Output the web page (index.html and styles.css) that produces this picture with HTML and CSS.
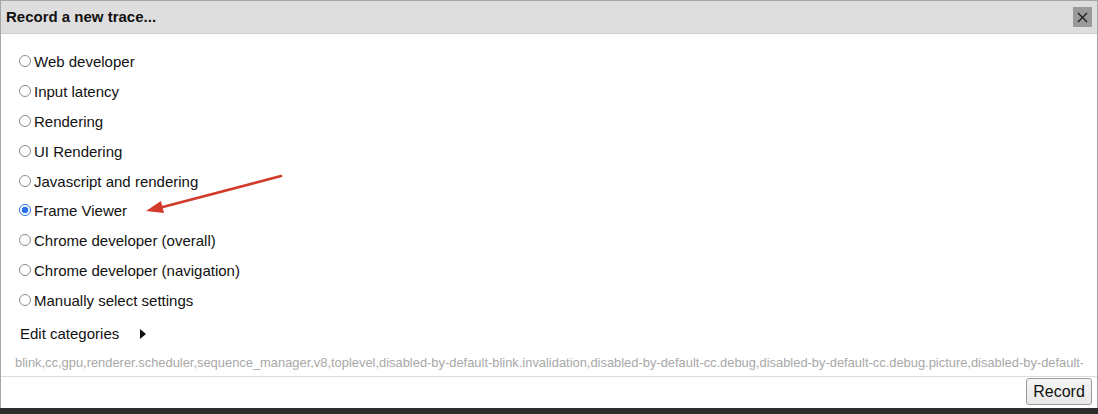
FILE: index.html
```html
<!DOCTYPE html>
<html>
<head>
<meta charset="utf-8">
<link rel="stylesheet" href="styles.css">
</head>
<body>
<div class="dialog">
  <div class="titlebar">
    <span class="title">Record a new trace...</span>
    <button class="close" aria-label="close">
      <svg width="11" height="11" viewBox="0 0 11 11"><path d="M1 1L10 10M10 1L1 10" stroke="#1e1e1e" stroke-width="1.4"/></svg>
    </button>
  </div>
  <div class="content">
    <ul class="presets">
      <li><span class="radio"></span>Web developer</li>
      <li><span class="radio"></span>Input latency</li>
      <li><span class="radio"></span>Rendering</li>
      <li><span class="radio"></span>UI Rendering</li>
      <li><span class="radio"></span>Javascript and rendering</li>
      <li><span class="radio checked"></span>Frame Viewer</li>
      <li><span class="radio"></span>Chrome developer (overall)</li>
      <li><span class="radio"></span>Chrome developer (navigation)</li>
      <li><span class="radio"></span>Manually select settings</li>
    </ul>
    <div class="edit">Edit categories <span class="tri"></span></div>
    <div class="cats">blink,cc,gpu,renderer.scheduler,sequence_manager,v8,toplevel,disabled-by-default-blink.invalidation,disabled-by-default-cc.debug,disabled-by-default-cc.debug.picture,disabled-by-default-</div>
    <svg class="arrow" width="160" height="60" viewBox="0 0 160 60">
      <line x1="140" y1="6" x2="18" y2="38" stroke="#d23a2b" stroke-width="2.6" stroke-linecap="round"/>
      <path d="M5 41 L20 31 L23 43 Z" fill="#d23a2b"/>
    </svg>
  </div>
  <div class="footer">
    <button class="record">Record</button>
  </div>
</div>
<div class="bottombar"></div>
</body>
</html>
```
FILE: styles.css
```css
html, body {
  margin: 0;
  padding: 0;
  background: #ffffff;
  font-family: "Liberation Sans", Arial, sans-serif;
  color: #111;
}
.dialog {
  box-sizing: border-box;
  width: 1098px;
  height: 408px;
  border: 1px solid #a6a6a6;
  border-bottom: none;
  display: flex;
  flex-direction: column;
  background: #fff;
}
.titlebar {
  height: 32px;
  flex: none;
  background: #dedede;
  border-bottom: 1px solid #cfcfcf;
  display: flex;
  align-items: center;
  justify-content: space-between;
  padding: 0 5px 0 5px;
}
.title {
  font-weight: bold;
  font-size: 15px;
  color: #111;
  margin-top: -1px;
}
.close {
  width: 19px;
  height: 20px;
  padding: 0;
  border: none;
  background: #9a9a9a;
  display: flex;
  align-items: center;
  justify-content: center;
}
.content {
  position: relative;
  flex: 1;
  padding: 13px 0 0 0;
  border-bottom: 1px solid #dcdcdc;
}
.presets {
  list-style: none;
  margin: 0;
  padding: 0 0 0 18px;
}
.presets li {
  height: 29.8px;
  display: flex;
  align-items: center;
  font-size: 15px;
  color: #111;
}
.radio {
  box-sizing: border-box;
  width: 12px;
  height: 12px;
  border: 1px solid #8c8c8c;
  border-radius: 50%;
  margin-right: 3px;
  background: #fff;
  margin-top: -1px;
}
.radio.checked {
  border: 1px solid #2a72e8;
  background: radial-gradient(circle, #2a72e8 0 3px, #fff 3.6px);
}
.edit {
  margin: 4px 0 0 19px;
  height: 29px;
  display: flex;
  align-items: center;
  font-size: 15px;
  color: #111;
}
.tri {
  display: inline-block;
  width: 0;
  height: 0;
  border-top: 5px solid transparent;
  border-bottom: 5px solid transparent;
  border-left: 6px solid #111;
  margin-left: 21px;
}
.cats {
  margin: 7px 14px 0 14px;
  font-size: 12.9px;
  color: #a8a8a8;
  white-space: nowrap;
  overflow: hidden;
  line-height: 16px;
}
.arrow {
  position: absolute;
  left: 140px;
  top: 136px;
}
.footer {
  height: 31px;
  flex: none;
  box-sizing: border-box;
  display: flex;
  justify-content: flex-end;
  align-items: flex-start;
  padding: 1px 5px 0 0;
}
.record {
  width: 66px;
  height: 27px;
  font-family: "Liberation Sans", Arial, sans-serif;
  font-size: 16px;
  color: #111;
  background: linear-gradient(#f6f6f6, #e8e8e8);
  border: 1px solid #9c9c9c;
  border-radius: 3px;
  padding: 0;
}
.bottombar {
  height: 6px;
  background: #2e2e2e;
}
```
